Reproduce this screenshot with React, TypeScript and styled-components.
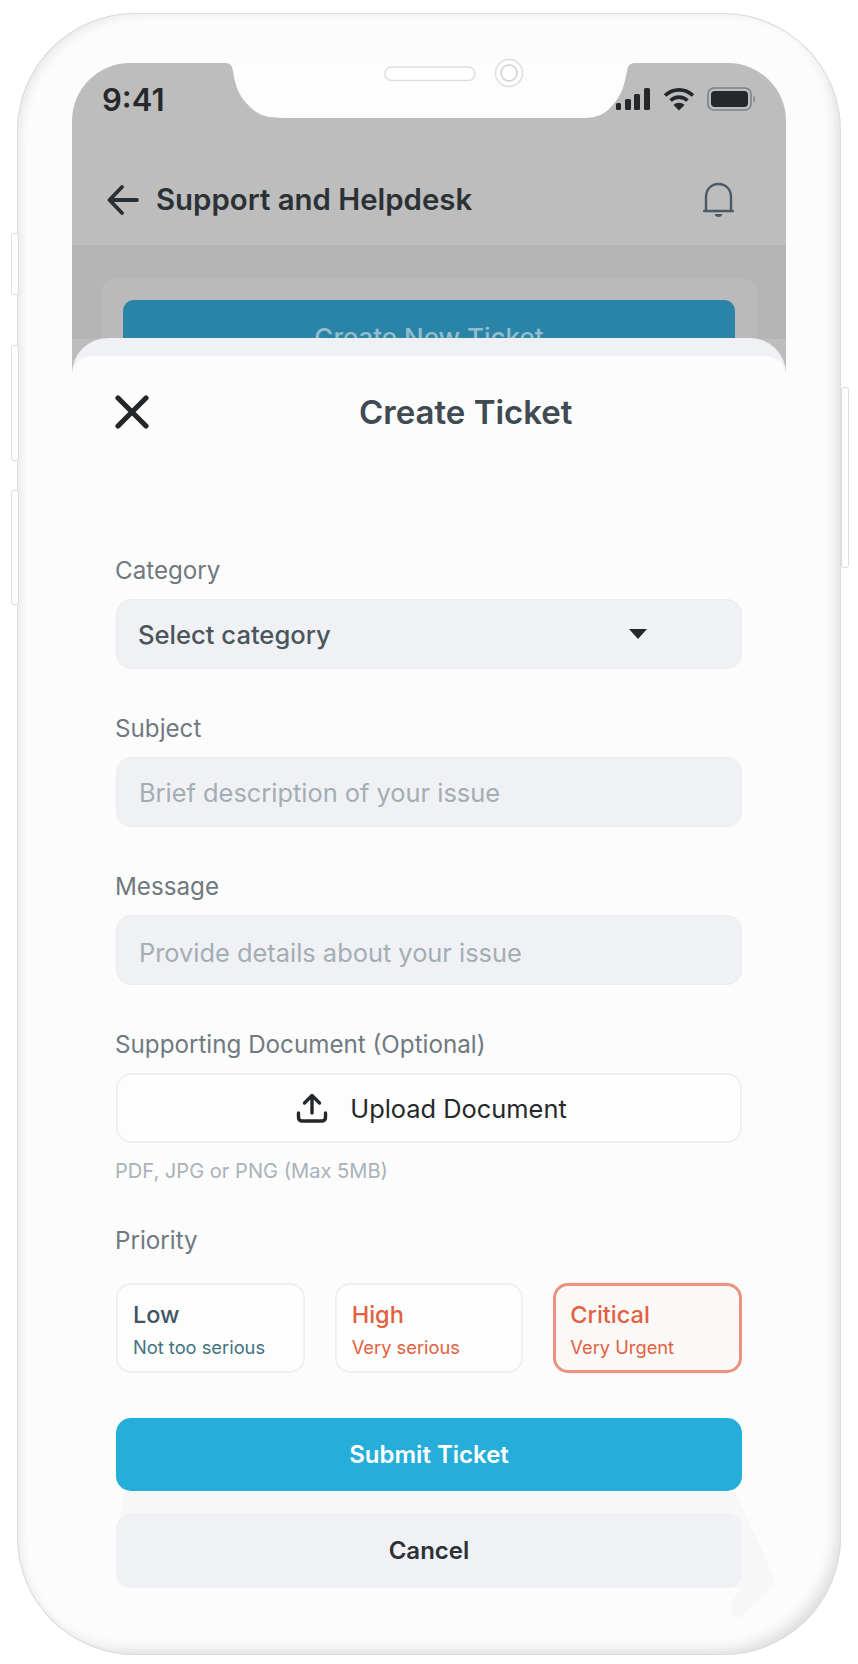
import styled, { createGlobalStyle } from 'styled-components';

const GlobalStyle = createGlobalStyle`
  html, body {
    margin: 0;
    padding: 0;
    background: #ffffff;
    font-family: 'Inter', 'Liberation Sans', sans-serif;
  }
  * {
    box-sizing: border-box;
  }
`;

type PriorityItem = {
  title: string;
  note: string;
  tone: 'calm' | 'alert';
  selected?: boolean;
};

const priorities: PriorityItem[] = [
  { title: 'Low', note: 'Not too serious', tone: 'calm' },
  { title: 'High', note: 'Very serious', tone: 'alert' },
  { title: 'Critical', note: 'Very Urgent', tone: 'alert', selected: true },
];

const App = () => {
  return (
    <Page>
      <GlobalStyle />
      <Phone>
        <SideButton $side="left" $top={220} $height={62} />
        <SideButton $side="left" $top={332} $height={116} />
        <SideButton $side="left" $top={477} $height={115} />
        <SideButton $side="right" $top={374} $height={181} />
        <Screen>
          <StatusBar>
            <Time>9:41</Time>
            <StatusIcons>
              <svg width="36" height="24" viewBox="0 0 36 24" aria-hidden="true">
                <rect x="1" y="16" width="5" height="7" rx="1.5" fill="#25282b" />
                <rect x="10" y="12" width="6" height="11" rx="1.5" fill="#25282b" />
                <rect x="19" y="7" width="6" height="16" rx="1.5" fill="#25282b" />
                <rect x="29" y="1" width="6" height="22" rx="1.5" fill="#25282b" />
              </svg>
              <svg width="32" height="24" viewBox="0 0 32 24" aria-hidden="true">
                <path d="M2 8.5C10 1 22 1 30 8.5" fill="none" stroke="#25282b" strokeWidth="3.6" />
                <path d="M7.5 13.5C12.5 9 19.5 9 24.5 13.5" fill="none" stroke="#25282b" strokeWidth="3.6" />
                <path d="M16 23.5L10.5 18C13.5 15 18.5 15 21.5 18Z" fill="#25282b" />
              </svg>
              <svg width="50" height="24" viewBox="0 0 50 24" aria-hidden="true">
                <rect x="1" y="1" width="43" height="22" rx="6" fill="none" stroke="#79838a" strokeWidth="1.6" />
                <rect x="4" y="4" width="37" height="16" rx="4" fill="#25282b" />
                <path d="M46.5 8.5C48.5 9.5 48.5 14.5 46.5 15.5Z" fill="#79838a" />
              </svg>
            </StatusIcons>
          </StatusBar>
          <Header>
            <HeaderTitle>
              <svg width="32" height="30" viewBox="0 0 32 30" aria-hidden="true">
                <path
                  d="M15 2L2.5 15L15 28M3 15H30"
                  fill="none"
                  stroke="#2a2f33"
                  strokeWidth="3.8"
                  strokeLinecap="round"
                  strokeLinejoin="round"
                />
              </svg>
              <HeaderText>Support and Helpdesk</HeaderText>
            </HeaderTitle>
            <svg width="31" height="36" viewBox="0 0 31 36" aria-hidden="true">
              <path
                d="M3 29V15C3 7 8.5 2 15.5 2S28 7 28 15V29M1 29H30"
                fill="none"
                stroke="#4b5a64"
                strokeWidth="2.4"
                strokeLinecap="round"
              />
              <path d="M11.5 32H19.5C19 36 12 36 11.5 32Z" fill="#4b5a64" />
            </svg>
          </Header>
          <Behind>
            <BehindCard>
              <CreateButton>Create New Ticket</CreateButton>
            </BehindCard>
          </Behind>
          <SheetBack>
            <Sheet>
              <SheetTop>
                <svg width="34" height="34" viewBox="0 0 34 34" aria-hidden="true">
                  <path d="M3 3L31 31M31 3L3 31" stroke="#25282b" strokeWidth="5.2" strokeLinecap="round" />
                </svg>
                <SheetTitle>Create Ticket</SheetTitle>
              </SheetTop>

              <Group>
                <Label>Category</Label>
                <Field>
                  <SelectValue>Select category</SelectValue>
                  <Caret />
                </Field>
              </Group>

              <Group>
                <Label>Subject</Label>
                <Field>
                  <Placeholder>Brief description of your issue</Placeholder>
                </Field>
              </Group>

              <Group>
                <Label>Message</Label>
                <Field>
                  <Placeholder $drop={4}>Provide details about your issue</Placeholder>
                </Field>
              </Group>

              <Group>
                <Label>Supporting Document (Optional)</Label>
                <UploadButton>
                  <svg width="32" height="30" viewBox="0 0 32 30" aria-hidden="true">
                    <path
                      d="M16 20V3M8.5 10L16 2.5L23.5 10M2.5 20V24.5C2.5 26.5 4 28 6 28H26C28 28 29.5 26.5 29.5 24.5V20"
                      fill="none"
                      stroke="#25282b"
                      strokeWidth="3.4"
                      strokeLinecap="round"
                      strokeLinejoin="round"
                    />
                  </svg>
                  Upload Document
                </UploadButton>
                <Hint>PDF, JPG or PNG (Max 5MB)</Hint>
              </Group>

              <PriorityGroup>
                <PriorityLabel>Priority</PriorityLabel>
                <PriorityRow>
                  {priorities.map((item) => (
                    <PriorityCard key={item.title} $selected={item.selected}>
                      <PriorityTitle $tone={item.tone}>{item.title}</PriorityTitle>
                      <PriorityNote $tone={item.tone}>{item.note}</PriorityNote>
                    </PriorityCard>
                  ))}
                </PriorityRow>
              </PriorityGroup>

              <Actions>
                <GhostShape width="664" height="204" viewBox="0 0 664 204" aria-hidden="true">
                  <path
                    d="M9 73H619L657 157Q660 165 656 170L626 198Q620 202 616 197Q613 190 618 180L626 170H4V95Z"
                    fill="#f7f7f7"
                  />
                </GhostShape>
                <SubmitButton>Submit Ticket</SubmitButton>
                <CancelButton>Cancel</CancelButton>
              </Actions>
            </Sheet>
          </SheetBack>
        </Screen>
        <Notch width="411" height="58" viewBox="0 0 411 58" aria-hidden="true">
          <path
            d="M0 0H411C405 0 403 2 402 8C399 24 396 35 383 47C373 55 365 55 353 55H58C46 55 34 54 24 43C12 31 10 20 8 8C7 2 5 0 0 0Z"
            fill="#fdfdfd"
          />
          <rect x="160" y="4" width="90" height="13.5" rx="6.7" fill="#ffffff" stroke="#dcdfe2" strokeWidth="1.5" />
          <circle cx="284" cy="10" r="13.5" fill="#ffffff" stroke="#dedede" strokeWidth="1.5" />
          <circle cx="284" cy="10" r="8" fill="#ffffff" stroke="#d0d0d0" strokeWidth="1.5" />
        </Notch>
      </Phone>
    </Page>
  );
};

const Page = styled.div`
  width: 858px;
  height: 1664px;
  padding: 13px 0 0 17px;
  overflow: hidden;
  background: #ffffff;
`;

const Phone = styled.div`
  position: relative;
  width: 824px;
  height: 1642px;
  padding: 50px 55px 14px;
  border-radius: 118px;
  background: #fcfcfc;
  box-shadow:
    inset 0 0 0 1px #dcdcdc,
    inset -9px -9px 14px -5px #dcdcdc,
    inset 8px 5px 12px -6px #e2e2e2;
`;

const SideButton = styled.div<{ $side: 'left' | 'right'; $top: number; $height: number }>`
  position: absolute;
  top: ${(p) => p.$top}px;
  ${(p) => (p.$side === 'left' ? 'left: -6px;' : 'right: -8px;')}
  width: 8px;
  height: ${(p) => p.$height}px;
  border: 1px solid #dddddd;
  border-radius: 3px;
  background: #ffffff;
`;

const Screen = styled.div`
  height: 100%;
  display: flex;
  flex-direction: column;
  overflow: hidden;
  border-radius: 58px 58px 70px 70px;
  background: linear-gradient(#bdbdbd 0 400px, transparent 400px);
`;

const Notch = styled.svg`
  position: absolute;
  top: 50px;
  left: 208px;
  overflow: visible;
`;

const StatusBar = styled.div`
  height: 68px;
  padding: 22px 29px 0 30px;
  display: flex;
  align-items: flex-start;
  justify-content: space-between;
`;

const Time = styled.span`
  font-size: 31px;
  line-height: 30px;
  font-weight: 600;
  color: #25282b;
`;

const StatusIcons = styled.div`
  display: flex;
  align-items: center;
  gap: 12px;
  margin-top: 2px;
`;

const Header = styled.div`
  height: 114px;
  padding: 23px 52px 0 35px;
  display: flex;
  align-items: center;
  justify-content: space-between;
`;

const HeaderTitle = styled.div`
  display: flex;
  align-items: center;
  gap: 17px;
`;

const HeaderText = styled.span`
  font-size: 29.4px;
  font-weight: 600;
  color: #2b3135;
`;

const Behind = styled.div`
  height: 94px;
  padding: 34px 29px 0;
  overflow: hidden;
  background: #b5b5b5;
`;

const BehindCard = styled.div`
  height: 120px;
  padding: 21px 22px;
  border-radius: 14px;
  background: #bababa;
`;

const CreateButton = styled.div`
  height: 80px;
  padding-top: 22px;
  border-radius: 11px;
  background: #2a84a8;
  color: #92bdce;
  font-size: 26px;
  font-weight: 500;
  text-align: center;
`;

const SheetBack = styled.div`
  flex: 1;
  margin-top: -1px;
  padding-top: 18px;
  border-radius: 36px 36px 0 0;
  background: linear-gradient(#f0f1f5 0 60px, transparent 60px);
`;

const Sheet = styled.div`
  height: 100%;
  padding: 39px 44px 0;
  border-radius: 20px 20px 0 0;
  background: #fcfcfc;
`;

const SheetTop = styled.div`
  height: 34px;
  margin-bottom: 127px;
  display: flex;
  align-items: center;
  svg {
    margin-left: -1px;
  }
`;

const SheetTitle = styled.h2`
  margin: 0 0 0 210px;
  font-size: 33px;
  font-weight: 600;
  color: #3f4a52;
`;

const Group = styled.div`
  margin-bottom: 45px;
  &:nth-of-type(5) {
    margin-bottom: 0;
  }
`;

const PriorityGroup = styled.div`
  margin-top: 41px;
`;

const Label = styled.div`
  height: 30px;
  margin: 0 0 13px -1px;
  font-size: 24.2px;
  line-height: 30px;
  color: #6f7980;
`;

const PriorityLabel = styled(Label)`
  margin-bottom: 27px;
`;

const Field = styled.div`
  height: 70px;
  padding: 0 21px;
  display: flex;
  align-items: center;
  justify-content: space-between;
  border: 1px solid #eaecef;
  border-radius: 15px;
  background: #f0f1f4;
`;

const SelectValue = styled.span`
  font-size: 25.6px;
  font-weight: 450;
  color: #4a555c;
`;

const Placeholder = styled.span<{ $drop?: number }>`
  padding-top: ${(p) => p.$drop ?? 1}px;
  margin-left: 1px;
  font-size: 25.4px;
  color: #a3adb4;
`;

const Caret = styled.span`
  width: 0;
  height: 0;
  margin-right: 73px;
  border-left: 9px solid transparent;
  border-right: 9px solid transparent;
  border-top: 10px solid #25282b;
`;

const UploadButton = styled.div`
  height: 70px;
  padding-left: 5px;
  display: flex;
  align-items: center;
  justify-content: center;
  gap: 22px;
  border: 2px solid #eef0f2;
  border-radius: 15px;
  background: #fdfdfd;
  font-size: 25.4px;
  font-weight: 400;
  color: #25282b;
`;

const Hint = styled.div`
  margin: 14px 0 0 -1px;
  font-size: 20.1px;
  line-height: 28px;
  color: #a9b2b9;
`;

const PriorityRow = styled.div`
  display: grid;
  grid-template-columns: repeat(3, 1fr);
  gap: 30px;
`;

const PriorityCard = styled.div<{ $selected?: boolean }>`
  height: 90px;
  padding: ${(p) => (p.$selected ? '14px 0 0 14px' : '15px 0 0 15px')};
  border: ${(p) => (p.$selected ? '3px solid #ea9280' : '2px solid #eef0f2')};
  border-radius: 15px;
  background: ${(p) => (p.$selected ? '#faf9f8' : '#fdfdfd')};
`;

const PriorityTitle = styled.div<{ $tone: 'calm' | 'alert' }>`
  font-size: 23.5px;
  line-height: 30px;
  font-weight: 500;
  color: ${(p) => (p.$tone === 'calm' ? '#3f5560' : '#e2603f')};
`;

const PriorityNote = styled.div<{ $tone: 'calm' | 'alert' }>`
  margin-top: 5px;
  font-size: 18.3px;
  line-height: 24px;
  color: ${(p) => (p.$tone === 'calm' ? '#3f7480' : '#e2603f')};
`;

const Actions = styled.div`
  position: relative;
  margin-top: 45px;
  display: flex;
  flex-direction: column;
  gap: 22px;
`;

const GhostShape = styled.svg`
  position: absolute;
  top: 0;
  left: 0;
`;

const SubmitButton = styled.div`
  position: relative;
  height: 73px;
  display: flex;
  align-items: center;
  justify-content: center;
  border-radius: 15px;
  background: #25aed9;
  font-size: 24px;
  font-weight: 600;
  color: #ffffff;
`;

const CancelButton = styled.div`
  position: relative;
  height: 75px;
  display: flex;
  align-items: center;
  justify-content: center;
  border-radius: 15px;
  background: #f0f1f4;
  font-size: 24px;
  font-weight: 600;
  color: #2b3135;
`;

export default App;
